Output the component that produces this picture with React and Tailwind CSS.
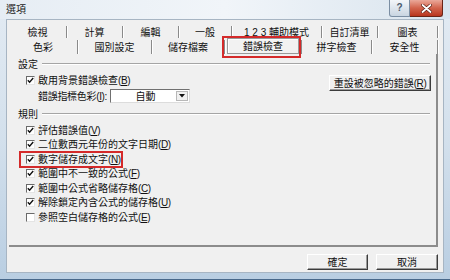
import React from 'react';

const FONT = "font-['Liberation_Sans','Noto_Sans_CJK_TC',sans-serif]";

const row1 = [
    { label: '檢視', w: 'w-[58px]' },
    { label: '計算', w: 'w-[56px]' },
    { label: '編輯', w: 'w-[56px]' },
    { label: '一般', w: 'w-[53px]' },
    { label: '1 2 3 輔助模式', w: 'w-[90px]' },
    { label: '自訂清單', w: 'w-[56px]' },
    { label: '圖表', w: 'w-[60px]' },
];

const row2 = [
    { label: '色彩', w: 'w-[69px]' },
    { label: '國別設定', w: 'w-[74px]' },
    { label: '儲存檔案', w: 'w-[73px]' },
    { label: '錯誤檢查', w: 'w-[77px]', active: true },
    { label: '拼字檢查', w: 'w-[70px]' },
    { label: '安全性', w: 'w-[66px]' },
];

const rules = [
    { text: '評估錯誤值', key: 'V', checked: true },
    { text: '二位數西元年份的文字日期', key: 'D', checked: true },
    { text: '數字儲存成文字', key: 'N', checked: true, marked: true },
    { text: '範圍中不一致的公式', key: 'F', checked: true },
    { text: '範圍中公式省略儲存格', key: 'C', checked: true },
    { text: '解除鎖定內含公式的儲存格', key: 'U', checked: true },
    { text: '參照空白儲存格的公式', key: 'E', checked: false },
];

const Key = ({ k }) => (
    <span className="tracking-[-0.4px]">(<span className="underline underline-offset-1">{k}</span>)</span>
);

const CheckBox = ({ checked }) => (
    <span className="w-[9px] h-[9px] shrink-0 bg-white border-t border-l border-t-[#6a6a6a] border-l-[#6a6a6a] border-b border-r border-b-[#e4e4e4] border-r-[#e4e4e4] flex items-center justify-center">
        {checked && (
            <svg width="7" height="7" viewBox="0 0 7 7">
                <polyline points="0.8,3.2 2.6,5.2 6.2,1" fill="none" stroke="#111" strokeWidth="1.4" />
            </svg>
        )}
    </span>
);

const GroupHeader = ({ title }) => (
    <div className="flex items-center h-[12px] pl-[9px] pr-[6px] gap-[4px]">
        <span className="whitespace-nowrap">{title}</span>
        <div className="flex-1 h-[2px] border-t border-t-[#a5a5a5] border-b border-b-white" />
    </div>
);

const RaisedButton = ({ children, className = '' }) => (
    <div className={`flex items-center justify-center bg-[#f0f0f0] border-t border-l border-t-white border-l-white border-b border-r border-b-[#3c3c3c] border-r-[#3c3c3c] shadow-[inset_-1px_-1px_0_#9a9a9a] whitespace-nowrap ${className}`}>
        {children}
    </div>
);

const App = () => {
    return (
        <div className={`w-[450px] h-[280px] flex flex-col bg-gradient-to-b from-[#e3ebf3] via-[#d3e0ec] to-[#b9cee2] border-b border-b-[#48688a] text-[10px] text-[#111] ${FONT}`}>
            {/* title bar */}
            <div className="h-[19px] flex items-start shrink-0 bg-gradient-to-r from-[#e6edf4] via-[#f1f5f9] to-[#d9e4ee]">
                <span className="pl-[6px] pt-[5px] text-[10px] leading-none text-[#1b1b1b]">選項</span>
                <div className="ml-auto mr-[7px] flex">
                    <div className="w-[21px] h-[17px] rounded-bl-[3px] border border-t-0 border-[#7b8ea3] bg-gradient-to-b from-[#f3f6f9] to-[#c9d5e1] flex items-center justify-center text-[10px] font-bold text-[#4a5a6c] leading-none">
                        ?
                    </div>
                    <div className="w-[33px] h-[17px] rounded-br-[3px] border border-t-0 border-l-0 border-[#6a2416] bg-gradient-to-b from-[#eaa89a] via-[#d2634c] to-[#b8341c] flex items-center justify-center">
                        <svg width="11" height="9" viewBox="0 0 11 9">
                            <path d="M1.5 1 L9.5 8 M9.5 1 L1.5 8" stroke="#5a1d12" strokeWidth="3.2" strokeLinecap="round" />
                            <path d="M1.5 1 L9.5 8 M9.5 1 L1.5 8" stroke="#fff" strokeWidth="1.8" strokeLinecap="round" />
                        </svg>
                    </div>
                </div>
            </div>

            {/* client area */}
            <div className="flex-1 mx-[6px] mb-[6px] bg-[#f0f0f0] border border-[#a7b5c3] flex flex-col pt-[4px] pl-[2px] pr-[5px]">
                {/* tab rows */}
                <div className="flex h-[14px]">
                    {row1.map((t) => (
                        <div key={t.label} className={`${t.w} flex items-center justify-center border-r border-r-[#8a8a8a] shadow-[1px_0_0_#fff] mt-[2px] whitespace-nowrap`}>
                            {t.label}
                        </div>
                    ))}
                </div>
                <div className="flex h-[15px] mt-[1px]">
                    {row2.map((t) =>
                        t.active ? (
                            <div key={t.label} className={`${t.w} relative px-[2px] border-r border-r-[#8a8a8a] mt-[1px]`}>
                                <div className="h-[16px] -mt-[2px] flex items-center justify-center bg-[#f2f2f2] border border-[#9a9a9a] shadow-[inset_1px_1px_0_#fff]">
                                    {t.label}
                                </div>
                                <div className="absolute left-[-3px] top-[-4px] w-[79px] h-[22px] border-2 border-[#d42a2a]" />
                            </div>
                        ) : (
                            <div key={t.label} className={`${t.w} flex items-center justify-center border-r border-r-[#8a8a8a] shadow-[1px_0_0_#fff] mt-[1px] whitespace-nowrap`}>
                                {t.label}
                            </div>
                        )
                    )}
                </div>

                {/* tab page */}
                <div className="w-[429px] h-[193px] border-r-2 border-r-[#8c8c8c] border-b-2 border-b-[#8c8c8c] flex flex-col pt-[4px]">
                    <GroupHeader title="設定" />
                    <div className="flex mt-[3px] pl-[17px] pr-[5px]">
                        <div className="flex flex-col">
                            <div className="flex items-center h-[14px] gap-[3px]">
                                <CheckBox checked />
                                <span className="whitespace-nowrap">啟用背景錯誤檢查<Key k="B" /></span>
                            </div>
                            <div className="flex items-center h-[14px] mt-[2px] pl-[12px]">
                                <span className="w-[72px] whitespace-nowrap tracking-[-0.3px]">錯誤指標色彩<Key k="I" />:</span>
                                <div className="w-[80px] h-[14px] bg-white border-t border-l border-t-[#707070] border-l-[#707070] border-b border-r border-b-[#dcdcdc] border-r-[#dcdcdc] flex items-center">
                                    <span className="flex-1 text-center pl-[4px]">自動</span>
                                    <div className="w-[12px] h-[10px] mr-[1px] bg-[#f0f0f0] border border-[#b8b8b8] flex items-center justify-center">
                                        <svg width="6" height="4" viewBox="0 0 6 4">
                                            <polygon points="0,0 6,0 3,3.5" fill="#111" />
                                        </svg>
                                    </div>
                                </div>
                            </div>
                        </div>
                        <RaisedButton className="ml-auto mt-[2px] w-[102px] h-[16px]">
                            重設被忽略的錯誤<Key k="R" />
                        </RaisedButton>
                    </div>

                    <div className="mt-[5px]">
                        <GroupHeader title="規則" />
                    </div>
                    <div className="flex flex-col mt-[3px] pl-[17px]">
                        {rules.map((r) => (
                            <div key={r.key} className="relative flex items-center h-[14.5px] gap-[3px]">
                                <CheckBox checked={r.checked} />
                                <span className="whitespace-nowrap">{r.text}<Key k={r.key} /></span>
                                {r.marked && (
                                    <div className="absolute left-[-7px] top-[-1px] w-[104px] h-[17px] border-2 border-[#d42a2a]" />
                                )}
                            </div>
                        ))}
                    </div>
                </div>

                {/* dialog buttons */}
                <div className="flex justify-end gap-[8px] mt-[7px] w-[429px]">
                    <RaisedButton className="w-[61px] h-[16px]">確定</RaisedButton>
                    <RaisedButton className="w-[62px] h-[16px]">取消</RaisedButton>
                </div>
            </div>
        </div>
    );
};

export default App;
